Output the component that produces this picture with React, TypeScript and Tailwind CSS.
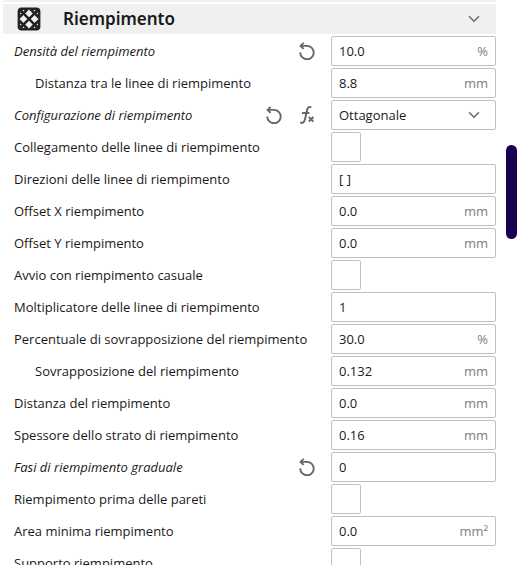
import React, { useState } from 'react';

interface Setting {
  id: string;
  label: string;
  value?: string;
  unit?: string;
  type: 'text' | 'select' | 'check';
  child?: boolean;
  changed?: boolean;
  formula?: boolean;
}

const settings: Setting[] = [
  { id: 'density', label: 'Densità del riempimento', type: 'text', value: '10.0', unit: '%', changed: true },
  { id: 'line-distance', label: 'Distanza tra le linee di riempimento', type: 'text', value: '8.8', unit: 'mm', child: true },
  { id: 'pattern', label: 'Configurazione di riempimento', type: 'select', value: 'Ottagonale', changed: true, formula: true },
  { id: 'connect', label: 'Collegamento delle linee di riempimento', type: 'check' },
  { id: 'angles', label: 'Direzioni delle linee di riempimento', type: 'text', value: '[ ]' },
  { id: 'offset-x', label: 'Offset X riempimento', type: 'text', value: '0.0', unit: 'mm' },
  { id: 'offset-y', label: 'Offset Y riempimento', type: 'text', value: '0.0', unit: 'mm' },
  { id: 'random', label: 'Avvio con riempimento casuale', type: 'check' },
  { id: 'multiplier', label: 'Moltiplicatore delle linee di riempimento', type: 'text', value: '1' },
  { id: 'overlap', label: 'Percentuale di sovrapposizione del riempimento', type: 'text', value: '30.0', unit: '%' },
  { id: 'overlap-mm', label: 'Sovrapposizione del riempimento', type: 'text', value: '0.132', unit: 'mm', child: true },
  { id: 'wipe', label: 'Distanza del riempimento', type: 'text', value: '0.0', unit: 'mm' },
  { id: 'thickness', label: 'Spessore dello strato di riempimento', type: 'text', value: '0.16', unit: 'mm' },
  { id: 'gradual', label: 'Fasi di riempimento graduale', type: 'text', value: '0', changed: true },
  { id: 'before-walls', label: 'Riempimento prima delle pareti', type: 'check' },
  { id: 'min-area', label: 'Area minima riempimento', type: 'text', value: '0.0', unit: 'mm²' },
  { id: 'support', label: 'Supporto riempimento', type: 'check' }
];

const InfillIcon = () => <svg width="24" height="24" viewBox="0 0 24 24" fill="none" aria-hidden="true">
    <rect x=".6" y=".6" width="22.8" height="22.8" rx="4" fill="#232323" />
    {/* Large cells */}
    <path d="M12 2.8L15.4 6.4L12 10L8.6 6.4ZM12 14L15.4 17.6L12 21.2L8.6 17.6ZM6.4 8.4L10 12L6.4 15.6L2.8 12ZM17.6 8.4L21.2 12L17.6 15.6L14 12Z" fill="#f0f0f0" stroke="#f0f0f0" strokeWidth=".6" strokeLinejoin="round" />
    {/* Small cells in the corners */}
    <path d="M5.4 3H7.6L6.5 4.6ZM16.4 3H18.6L17.5 4.6ZM5.4 21H7.6L6.5 19.4ZM16.4 21H18.6L17.5 19.4ZM3 5.4V7.6L4.6 6.5ZM21 5.4V7.6L19.4 6.5ZM3 16.4V18.6L4.6 17.5ZM21 16.4V18.6L19.4 17.5Z" fill="#f0f0f0" />
  </svg>;

const ChevronIcon = ({ className = '' }: { className?: string }) => <svg width="12" height="8" viewBox="0 0 12 8" fill="none" className={className} aria-hidden="true">
    <path d="M1 1.2L6 6.2L11 1.2" stroke="#666" strokeWidth="1.4" />
  </svg>;

const ResetIcon = () => <svg width="18" height="18" viewBox="0 0 18 18" fill="none" aria-hidden="true">
    <path d="M2.3 10.4A6.7 6.7 0 1 0 9 3.9H2.8" stroke="#666" strokeWidth="1.9" />
    <path d="M5.6 .9L2.6 3.9L5.6 6.9" stroke="#666" strokeWidth="1.9" />
  </svg>;

const FormulaIcon = () => <svg width="18" height="20" viewBox="0 0 18 20" fill="none" aria-hidden="true">
    <path d="M13.4 2.3C11 1.3 9.7 2.3 9.1 5L6.9 14.6C6.3 17.2 4.7 18.2 2.2 17.5M4 8H11.4" stroke="#666" strokeWidth="2" />
    <path d="M10.8 12L15.4 16.6M15.4 12L10.8 16.6" stroke="#666" strokeWidth="1.9" />
  </svg>;

const Control = ({ setting }: { setting: Setting }) => {
  const [value, setValue] = useState(setting.value ?? '');
  const [checked, setChecked] = useState(false);
  if (setting.type === 'check') {
    return <input id={setting.id} type="checkbox" checked={checked} onChange={e => setChecked(e.target.checked)} className="block size-[30px] appearance-none rounded-xs border border-[#c0c0c0] bg-white checked:bg-[#196ef0]" />;
  }
  if (setting.type === 'select') {
    return <div className="relative">
        <select id={setting.id} value={value} onChange={e => setValue(e.target.value)} className="block h-[30px] w-full appearance-none rounded-xs border border-[#c0c0c0] bg-white px-[7px]">
          <option>Ottagonale</option>
          <option>Griglia</option>
          <option>Linee</option>
        </select>
        <ChevronIcon className="pointer-events-none absolute top-[11px] right-4" />
      </div>;
  }
  return <div className="flex h-[30px] items-center rounded-xs border border-[#c0c0c0] bg-white px-[7px]">
      <input id={setting.id} type="text" value={value} onChange={e => setValue(e.target.value)} className="min-w-0 flex-1 outline-none" />
      {setting.unit && <span className="text-[#808080]">{setting.unit}</span>}
    </div>;
};

const SettingRow = ({ setting }: { setting: Setting }) => <div className="flex h-[30px] shrink-0 items-center">
    <label htmlFor={setting.id} className={`flex-1 whitespace-nowrap ${setting.child ? 'pl-8' : 'pl-[11px]'} ${setting.changed ? 'italic' : ''}`}>
      {setting.label}
    </label>
    <div className="flex items-center gap-[15px] pr-[15px]">
      {setting.changed && <button type="button" aria-label="Ripristina"><ResetIcon /></button>}
      {setting.formula && <button type="button" aria-label="Formula"><FormulaIcon /></button>}
    </div>
    <div className="w-[165px] shrink-0">
      <Control setting={setting} />
    </div>
  </div>;

export default function App() {
  return <div className="flex h-screen overflow-hidden bg-white pl-[3px] font-['Open_Sans','Noto_Sans',sans-serif] text-[13px] leading-[18px] text-[#191919]">
      <main className="flex min-w-0 flex-1 flex-col gap-[2px]">
        {/* Bottom edge of the category above */}
        <div className="h-[2px] shrink-0 bg-[#f0f0f0]" />
        <button type="button" className="flex h-[30px] shrink-0 items-center bg-[#f0f0f0] pr-4 pl-[14px] text-left">
          <InfillIcon />
          <span className="flex-1 pl-[22px] font-['Noto_Sans',sans-serif] text-[17px] font-semibold">Riempimento</span>
          <ChevronIcon />
        </button>
        {settings.map(setting => <SettingRow key={setting.id} setting={setting} />)}
      </main>
      <div className="w-[22px] shrink-0 pt-[145px] pr-px pl-[10px]">
        <div className="h-[94px] rounded-full bg-[#180050]" />
      </div>
    </div>;
}
